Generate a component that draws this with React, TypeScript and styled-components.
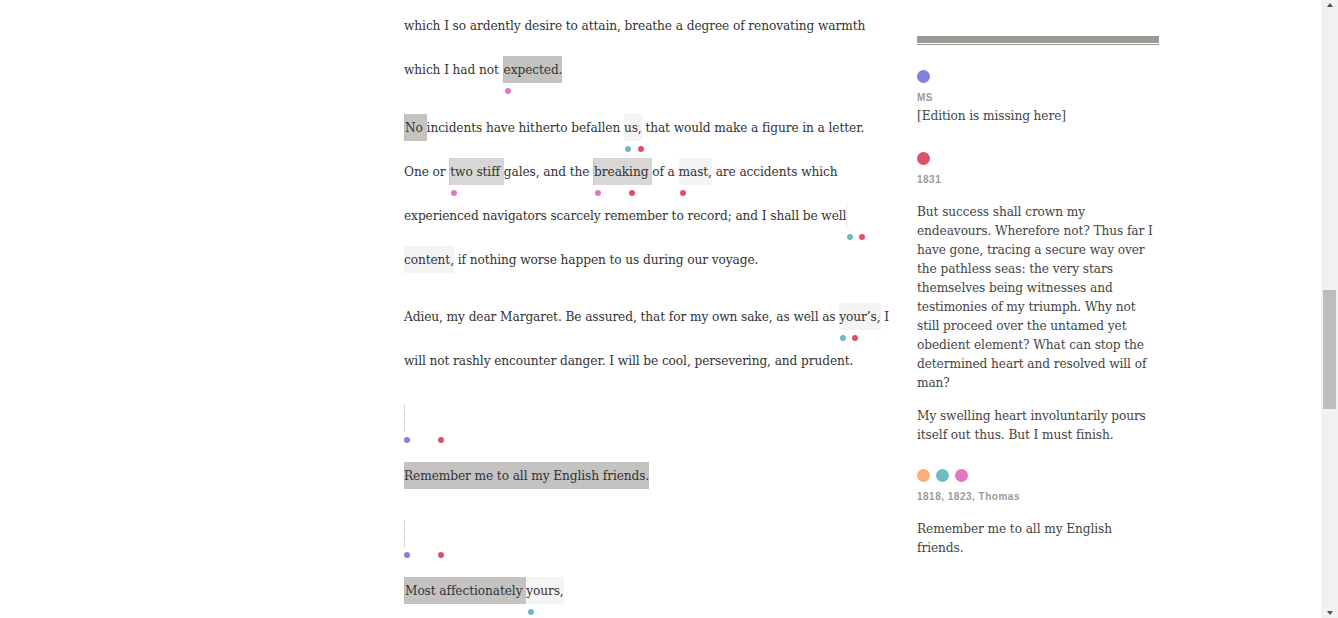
import React from "react";
import styled, { createGlobalStyle, css } from "styled-components";

const GlobalStyle = createGlobalStyle`
  html, body {
    margin: 0;
    padding: 0;
    overflow: hidden;
    background: #ffffff;
  }
  body {
    font-family: "DejaVu Serif", Georgia, serif;
  }
`;

const COLORS = {
  pink: "#e377c2",
  teal: "#6cbcc1",
  red: "#dc5068",
  purple: "#8180e0",
  orange: "#fdae7a",
};

type DotColor = keyof typeof COLORS;
type Tone = "dark" | "mid" | "light" | "none";

const TONES: Record<Tone, string> = {
  dark: "#c4c3c2",
  mid: "#d8d7d6",
  light: "#f4f4f4",
  none: "transparent",
};

const TEXT_SIZE = "12.2px";
const TEXT_SPACING = "-0.1px";

const Screen = styled.div`
  display: flex;
  height: 100vh;
  width: 100vw;
  overflow: hidden;
`;

const Page = styled.div`
  flex: 1;
  min-width: 0;
  overflow: hidden;
`;

const ScrollBar = styled.div`
  width: 17px;
  flex: none;
  display: flex;
  flex-direction: column;
  background: #f1f1f1;
`;

const ArrowButton = styled.div<{ $dir: "up" | "down" }>`
  height: 17px;
  flex: none;
  display: flex;
  justify-content: center;
  align-items: ${(p) => (p.$dir === "up" ? "flex-start" : "flex-end")};
  padding: ${(p) => (p.$dir === "up" ? "3px 0 0" : "0 0 3px")};
  box-sizing: border-box;
`;

const Triangle = styled.span<{ $dir: "up" | "down" }>`
  width: 0;
  height: 0;
  border-left: 3.5px solid transparent;
  border-right: 3.5px solid transparent;
  ${(p) =>
    p.$dir === "up"
      ? css`
          border-bottom: 4px solid #505050;
        `
      : css`
          border-top: 4px solid #505050;
        `}
`;

const Track = styled.div`
  flex: 1;
  padding: 0 2px;
`;

const Thumb = styled.div`
  margin-top: 273px;
  height: 119px;
  background: #bdbdbd;
`;

const Layout = styled.div`
  display: grid;
  grid-template-columns: 490px 242px;
  column-gap: 23px;
  padding-left: 404px;
  align-items: start;
`;

const Main = styled.main`
  padding-top: 12px;
  color: #333333;
  font-size: ${TEXT_SIZE};
  letter-spacing: ${TEXT_SPACING};
`;

const Para = styled.div`
  & + & {
    margin-top: 13.5px;
  }
`;

const Line = styled.div`
  height: 44px;
  line-height: 29px;
  white-space: nowrap;
`;

const Mark = styled.span<{ $tone: Tone; $start?: boolean; $empty?: boolean }>`
  position: relative;
  display: inline-block;
  height: 27px;
  line-height: 29px;
  vertical-align: top;
  background: ${(p) => TONES[p.$tone]};
  ${(p) =>
    p.$start &&
    css`
      border-left: 1px dotted #b5b5b5;
    `}
  ${(p) =>
    p.$empty &&
    css`
      width: 0;
    `}
`;

const Edge = styled.span`
  position: relative;
  display: inline-block;
  width: 1px;
  height: 27px;
  vertical-align: top;
  background: #ececec;
`;

const Dot = styled.span<{ $color: DotColor }>`
  position: absolute;
  top: 32px;
  width: 6px;
  height: 6px;
  border-radius: 50%;
  background: ${(p) => COLORS[p.$color]};
`;

const Side = styled.aside`
  padding-top: 36px;
  color: #444444;
  font-size: ${TEXT_SIZE};
  letter-spacing: ${TEXT_SPACING};
`;

const Rule = styled.div`
  height: 1px;
  border-top: 7px solid #9c9a97;
  border-bottom: 1px solid #9c9a97;
  margin-bottom: 24.5px;
`;

const Item = styled.section<{ $gap?: number }>`
  margin-top: ${(p) => p.$gap ?? 0}px;
`;

const Circles = styled.div`
  display: flex;
  gap: 6px;
`;

const Circle = styled.span<{ $color: DotColor }>`
  width: 13px;
  height: 13px;
  border-radius: 50%;
  background: ${(p) => COLORS[p.$color]};
`;

const Label = styled.div`
  margin-top: 9px;
  font-family: "Liberation Sans", Arial, sans-serif;
  font-weight: 700;
  font-size: 10px;
  line-height: 12px;
  letter-spacing: 0.5px;
  color: #9a9a9a;
`;

const Body = styled.div`
  padding-top: 3.5px;
  line-height: 19px;
  white-space: nowrap;
`;

const SideP = styled.p`
  margin: 13.5px 0 0;
`;

type DotSpec = [DotColor, number];

const Dots = ({ dots }: { dots?: DotSpec[] }) => (
  <>
    {dots?.map(([c, x], i) => (
      <Dot key={i} $color={c} style={{ left: x }} />
    ))}
  </>
);

const V = ({
  tone,
  start,
  dots,
  children,
}: {
  tone: Tone;
  start?: boolean;
  dots?: DotSpec[];
  children?: React.ReactNode;
}) => (
  <Mark $tone={tone} $start={start} $empty={!children}>
    {children}
    <Dots dots={dots} />
  </Mark>
);

export default function App() {
  return (
    <>
      <GlobalStyle />
      <Screen>
        <Page>
          <Layout>
            <Main>
              <Para>
                <Line>which I so ardently desire to attain, breathe a degree of renovating warmth</Line>
                <Line>
                  which I had not{" "}
                  <V tone="dark" start dots={[["pink", 1]]}>
                    expected.
                  </V>
                </Line>
              </Para>
              <Para>
                <Line>
                  <V tone="dark" start>
                    No{"\u00a0"}
                  </V>
                  incidents have hitherto befallen{" "}
                  <V tone="light" dots={[["teal", 1], ["red", 14]]}>
                    us,
                  </V>{" "}
                  that would make a figure in a letter.
                </Line>
                <Line>
                  One or{" "}
                  <V tone="mid" start dots={[["pink", 1]]}>
                    two stiff{"\u00a0"}
                  </V>
                  gales, and the{" "}
                  <V tone="mid" start dots={[["pink", 1], ["red", 35]]}>
                    breaking{"\u00a0"}
                  </V>
                  of a{" "}
                  <V tone="light" dots={[["red", 1]]}>
                    mast,
                  </V>{" "}
                  are accidents which
                </Line>
                <Line>
                  experienced navigators scarcely remember to record; and I shall be well
                  <Edge>
                    <Dots dots={[["teal", 1], ["red", 13]]} />
                  </Edge>
                </Line>
                <Line>
                  <V tone="light">content,</V> if nothing worse happen to us during our voyage.
                </Line>
              </Para>
              <Para>
                <Line>
                  Adieu, my dear Margaret. Be assured, that for my own sake, as well as{" "}
                  <V tone="light" dots={[["teal", 1], ["red", 13]]}>
                    your’s,
                  </V>{" "}
                  I
                </Line>
                <Line>will not rashly encounter danger. I will be cool, persevering, and prudent.</Line>
              </Para>
              <Para>
                <Line>
                  <V tone="none" start dots={[["purple", -1], ["red", 33]]} />
                </Line>
              </Para>
              <Para>
                <Line>
                  <V tone="dark">Remember me to all my English friends.</V>
                </Line>
              </Para>
              <Para>
                <Line>
                  <V tone="none" start dots={[["purple", -1], ["red", 33]]} />
                </Line>
              </Para>
              <Para>
                <Line>
                  <V tone="dark" start>
                    Most affectionately{"\u00a0"}
                  </V>
                  <V tone="light" dots={[["teal", 2]]}>
                    yours,
                  </V>
                </Line>
              </Para>
            </Main>
            <Side>
              <Rule />
              <Item>
                <Circles>
                  <Circle $color="purple" />
                </Circles>
                <Label>MS</Label>
                <Body>[Edition is missing here]</Body>
              </Item>
              <Item $gap={26}>
                <Circles>
                  <Circle $color="red" />
                </Circles>
                <Label>1831</Label>
                <Body>
                  <SideP>
                    But success shall crown my
                    <br />
                    endeavours. Wherefore not? Thus far I
                    <br />
                    have gone, tracing a secure way over
                    <br />
                    the pathless seas: the very stars
                    <br />
                    themselves being witnesses and
                    <br />
                    testimonies of my triumph. Why not
                    <br />
                    still proceed over the untamed yet
                    <br />
                    obedient element? What can stop the
                    <br />
                    determined heart and resolved will of
                    <br />
                    man?
                  </SideP>
                  <SideP>
                    My swelling heart involuntarily pours
                    <br />
                    itself out thus. But I must finish.
                  </SideP>
                </Body>
              </Item>
              <Item $gap={24}>
                <Circles>
                  <Circle $color="orange" />
                  <Circle $color="teal" />
                  <Circle $color="pink" />
                </Circles>
                <Label>1818, 1823, Thomas</Label>
                <Body>
                  <SideP>
                    Remember me to all my English
                    <br />
                    friends.
                  </SideP>
                </Body>
              </Item>
            </Side>
          </Layout>
        </Page>
        <ScrollBar>
          <ArrowButton $dir="up">
            <Triangle $dir="up" />
          </ArrowButton>
          <Track>
            <Thumb />
          </Track>
          <ArrowButton $dir="down">
            <Triangle $dir="down" />
          </ArrowButton>
        </ScrollBar>
      </Screen>
    </>
  );
}
